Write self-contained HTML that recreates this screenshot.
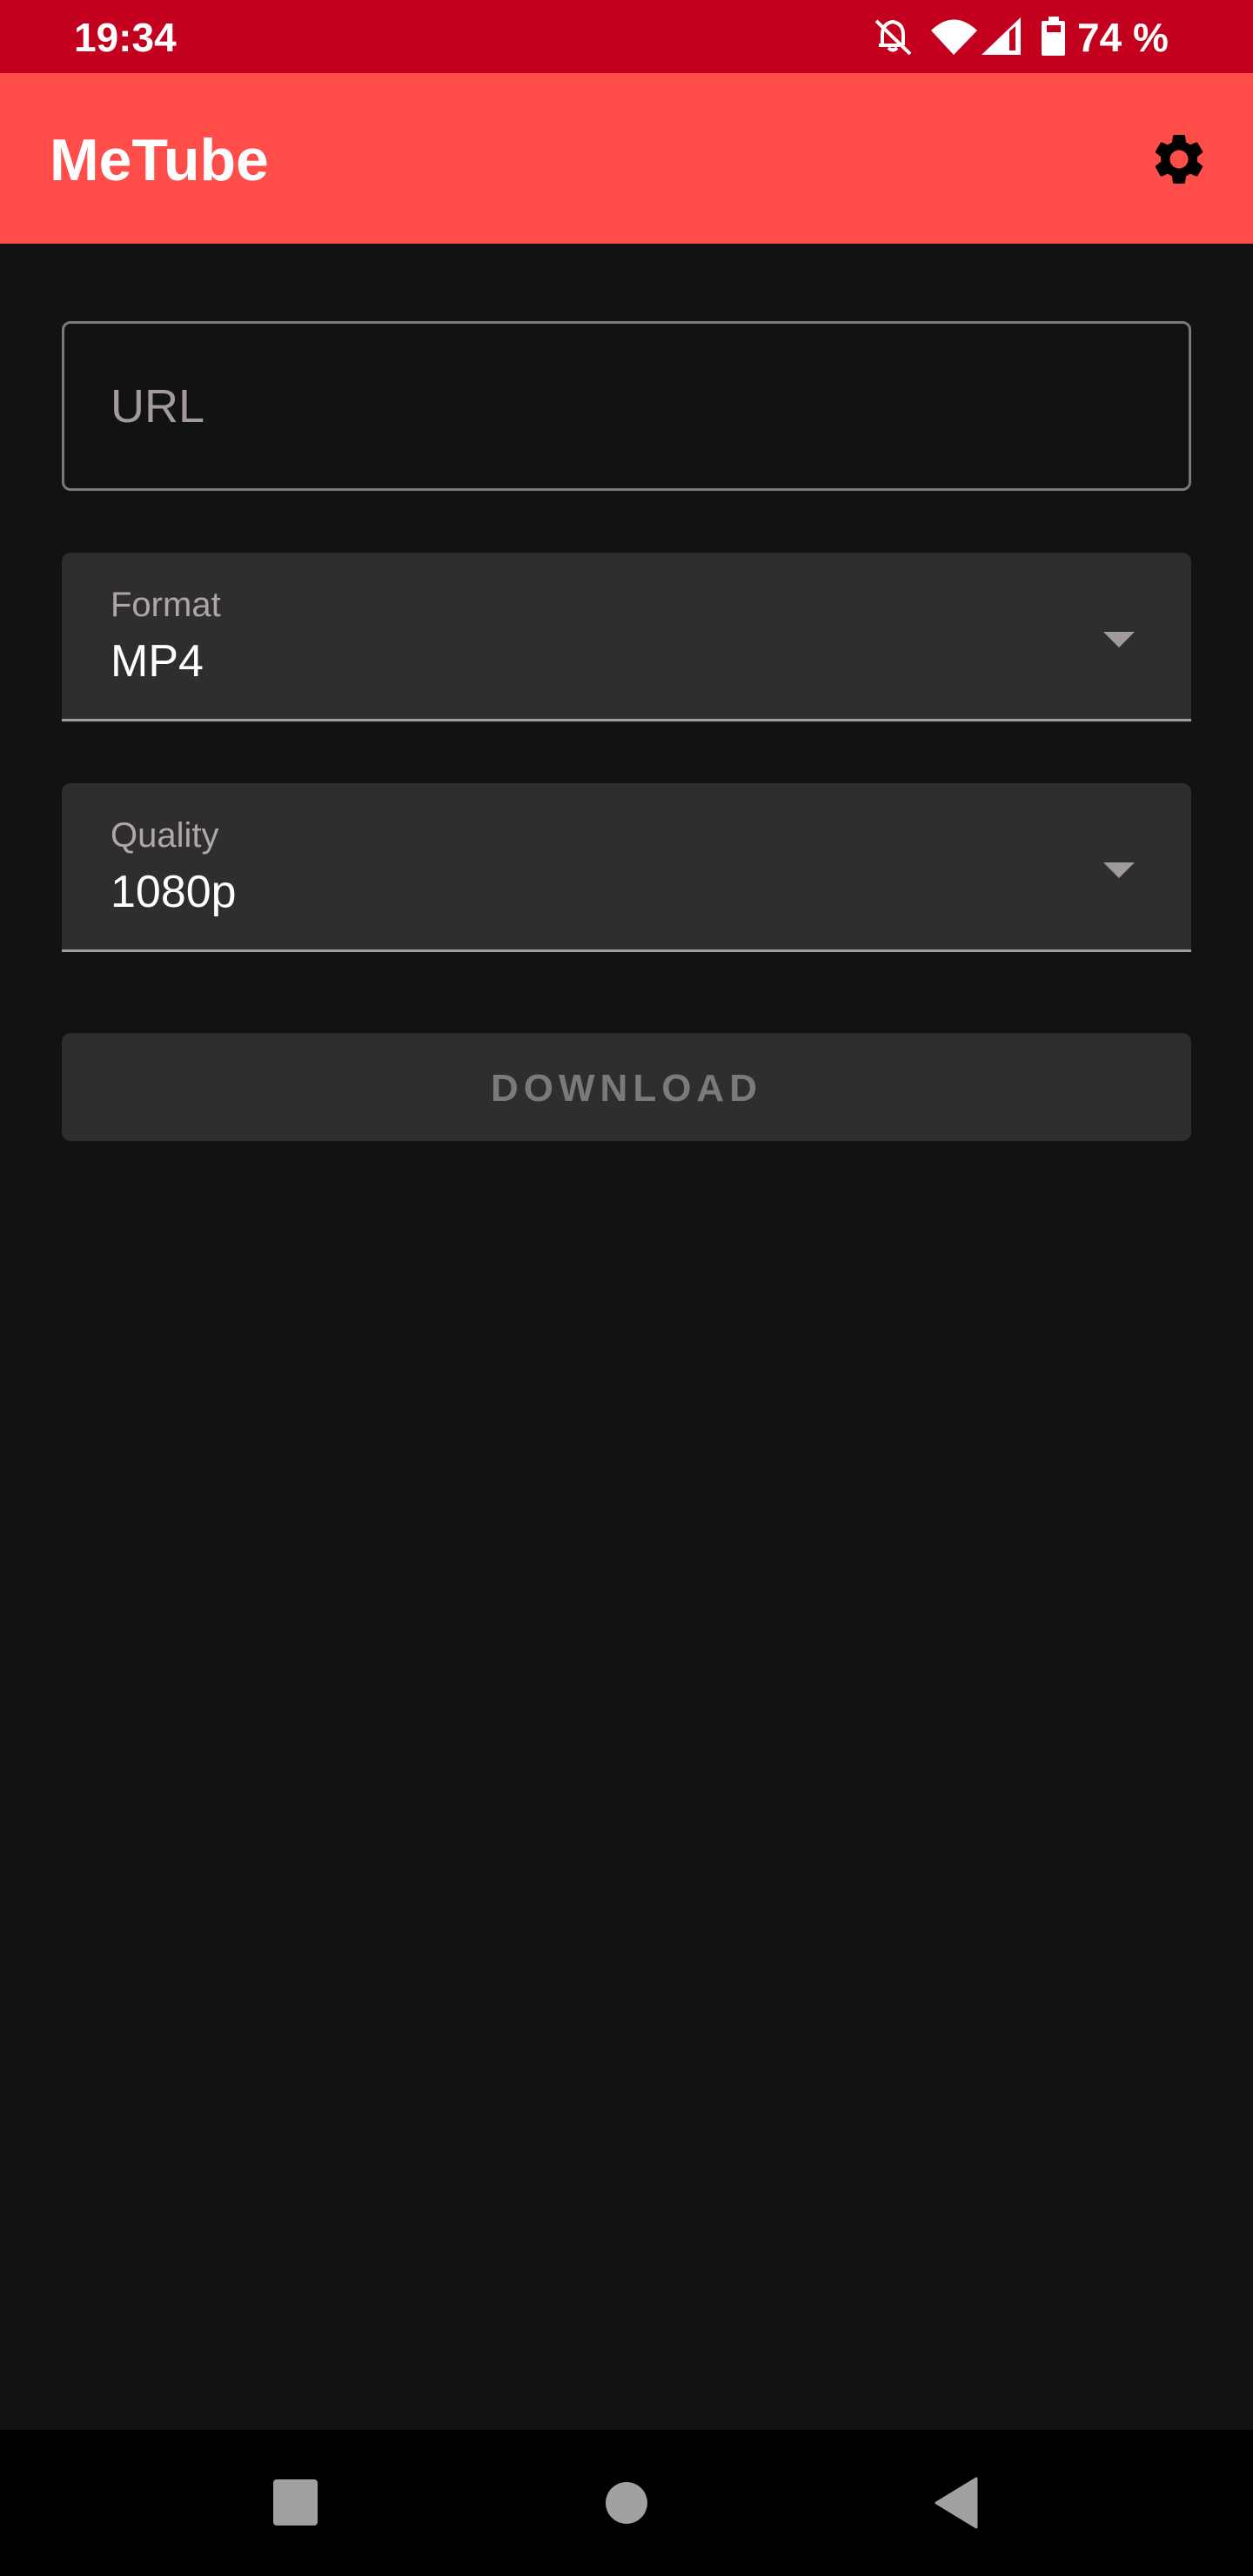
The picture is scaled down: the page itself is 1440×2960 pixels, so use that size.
<!DOCTYPE html>
<html><head><meta charset="utf-8"><style>
*{margin:0;padding:0;box-sizing:border-box}
body{width:1440px;height:2960px;background:#121212;font-family:"Liberation Sans",sans-serif;position:relative;overflow:hidden}
.abs{position:absolute}
</style></head><body>
<div class="abs" style="left:0;top:0;width:1440px;height:84px;background:#c4001f"></div>
<div class="abs" style="left:85px;top:15px;color:#fff;font-size:46px;font-weight:bold;line-height:56px">19:34</div>
<svg class="abs" style="left:1000px;top:15px" width="240" height="55" viewBox="1000 15 240 55">
 <g fill="none" stroke="#fff" stroke-width="4">
  <path d="M1014 50 V40 q0-13 12-15 q12 2 12 15 V52 M1010 52 H1034"/>
  <path d="M1021 55 q5 5 10 0"/>
  <line x1="1007" y1="24" x2="1046" y2="62"/>
 </g>
 <path d="M1070 35 Q1096 10 1123 35 L1096 63 Z" fill="#fff"/>
 <path d="M1128 63 L1173 20 V63 Z" fill="#fff"/>
 <path d="M1160 36 L1167 30 V58 H1160 Z" fill="#c4001f"/>
 <rect x="1205" y="19" width="12" height="6" fill="#fff"/>
 <rect x="1197" y="24" width="27" height="40" rx="2" fill="#fff"/>
 <rect x="1203" y="29" width="16" height="8" fill="#c4001f"/>
</svg>
<div class="abs" style="left:1238px;top:15px;color:#fff;font-size:46px;font-weight:bold;line-height:56px">74 %</div>

<div class="abs" style="left:0;top:84px;width:1440px;height:196px;background:#ff4d4a"></div>
<div class="abs" style="left:57px;top:144px;color:#fff;font-size:68px;font-weight:bold;line-height:80px">MeTube</div>
<svg class="abs" style="left:1320px;top:148px" width="70" height="70" viewBox="0 0 24 24"><path fill="#000" d="M19.14 12.94c.04-.3.06-.61.06-.94 0-.32-.02-.64-.07-.94l2.030-1.58c.18-.14.23-.41.12-.61l-1.92-3.32c-.12-.22-.37-.29-.59-.22l-2.39.96c-.5-.38-1.03-.7-1.62-.94l-.36-2.54c-.04-.24-.24-.41-.48-.41h-3.84c-.24 0-.43.17-.47.41l-.36 2.54c-.59.24-1.130.57-1.620.94l-2.39-.96c-.22-.08-.47 0-.59.22L2.74 8.87c-.12.21-.08.47.12.61l2.03 1.58c-.05.3-.09.63-.09.94s.02.64.07.94l-2.03 1.58c-.18.14-.23.41-.12.61l1.92 3.32c.12.22.37.29.59.22l2.39-.96c.5.38 1.03.7 1.62.94l.36 2.54c.05.24.24.41.48.41h3.84c.24 0 .44-.17.47-.41l.36-2.54c.59-.24 1.13-.56 1.62-.94l2.39.96c.22.08.47 0 .59-.22l1.92-3.32c.12-.22.07-.47-.12-.61l-2.01-1.58zM12 15.6c-1.98 0-3.6-1.62-3.6-3.6s1.62-3.6 3.6-3.6 3.6 1.62 3.6 3.6-1.62 3.6-3.6 3.6z"/></svg>

<div class="abs" style="left:71px;top:369px;width:1298px;height:195px;border:3px solid #7a7a7a;border-radius:10px;background:#121212"></div>
<div class="abs" style="left:127px;top:435px;color:#a29a9c;font-size:54px;line-height:64px">URL</div>

<div class="abs" style="left:71px;top:635px;width:1298px;height:194px;background:#2e2e2e;border-radius:10px 10px 0 0;border-bottom:3px solid #a0a0a0"></div>
<div class="abs" style="left:127px;top:671px;color:#b0a6a8;font-size:40px;line-height:48px">Format</div>
<div class="abs" style="left:127px;top:729px;color:#fff;font-size:52px;line-height:62px">MP4</div>
<svg class="abs" style="left:1268px;top:726px" width="36" height="18"><path d="M0 0H36L18 18Z" fill="#a09a9c"/></svg>

<div class="abs" style="left:71px;top:900px;width:1298px;height:194px;background:#2e2e2e;border-radius:10px 10px 0 0;border-bottom:3px solid #a0a0a0"></div>
<div class="abs" style="left:127px;top:936px;color:#b0a6a8;font-size:40px;line-height:48px">Quality</div>
<div class="abs" style="left:127px;top:994px;color:#fff;font-size:52px;line-height:62px">1080p</div>
<svg class="abs" style="left:1268px;top:991px" width="36" height="18"><path d="M0 0H36L18 18Z" fill="#a09a9c"/></svg>

<div class="abs" style="left:71px;top:1187px;width:1298px;height:124px;background:#2e2e2e;border-radius:10px;color:#7a7a7a;font-size:44px;font-weight:bold;letter-spacing:6px;text-align:center;line-height:128px">DOWNLOAD</div>

<div class="abs" style="left:0;top:2792px;width:1440px;height:168px;background:#000"></div>
<div class="abs" style="left:314px;top:2849px;width:51px;height:53px;background:#a0a0a0;border-radius:4px"></div>
<div class="abs" style="left:696px;top:2852px;width:48px;height:48px;background:#a0a0a0;border-radius:50%"></div>
<svg class="abs" style="left:1072px;top:2846px" width="52" height="60"><path d="M50 2 V58 L4 30 Z" fill="#a0a0a0" stroke="#a0a0a0" stroke-width="3" stroke-linejoin="round"/></svg>
</body></html>
